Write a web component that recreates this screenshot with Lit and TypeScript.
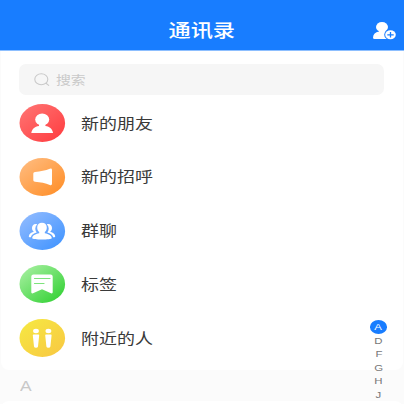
import { LitElement, html, css, svg } from "lit";
import { customElement } from "lit/decorators.js";

const grad = (id: string, a: string, b: string) => svg`
  <defs><linearGradient id=${id} x1="0.1" y1="0.1" x2="0.85" y2="0.9">
    <stop offset="0" stop-color=${a}></stop><stop offset="1" stop-color=${b}></stop>
  </linearGradient></defs>
  <ellipse cx="23.300" cy="19" rx="22.800" ry="18.900" fill="url(#${id})"></ellipse>`;

const entries = [
  {
    label: "新的朋友",
    icon: svg`${grad("red", "#ff706f", "#ff4245")}
      <ellipse cx="23.200" cy="15.500" rx="7" ry="6" fill="#fff"></ellipse>
      <path fill="#fff" d="M20 18h6.400v4c4.400.7 7.200 3.300 7.700 7H12.300c.5-3.700 3.300-6.300 7.700-7z"></path>`,
  },
  {
    label: "新的招呼",
    icon: svg`${grad("orange", "#ffb97a", "#ff922f")}
      <path fill="#fff" d="M16 14c5.500-.3 10.500-1.600 14.800-3.200q2.200-.7 2.200 1.200v13.800q0 1.900-2.200 1.200c-4.300-1.600-9.300-2.900-14.800-3.200q-1.700-.1-1.700-1.500v-6.800q0-1.400 1.700-1.500z"></path>`,
  },
  {
    label: "群聊",
    icon: svg`${grad("blue", "#8db9ff", "#4797ff")}
      <g fill="#fff">
        <path d="M18.200 12.200c-3-1-5.200.8-5.200 3.900 0 1.800.8 2.900 1.800 3.700-3 .7-4.800 2.200-5 4.800q0 .7.800.7h1.200c.8-2.500 2.700-3.900 5.900-4.800-2-2.500-2-5.800.5-8.300z"></path>
        <path d="M27.800 12.200c3-1 5.200.8 5.200 3.900 0 1.800-.8 2.900-1.800 3.700 3 .7 4.800 2.200 5 4.800q0 .7-.8.7h-1.200c-.8-2.500-2.700-3.900-5.900-4.800 2-2.500 2-5.800-.5-8.300z"></path>
        <path d="M23 10.800c3 0 4.800 2 4.800 4.700 0 2-.8 3.500-2 4.500v1.300c4 .8 6.700 2.100 7 4.700 0 1.200-4.800 1.500-9.800 1.500s-9.800-.3-9.800-1.500c.3-2.600 3-3.900 7-4.700V20c-1.200-1-2-2.500-2-4.500 0-2.700 1.800-4.700 4.800-4.700z"></path>
      </g>`,
  },
  {
    label: "标签",
    icon: svg`${grad("green", "#a1ee9b", "#3ad33b")}
      <path fill="#fff" d="M14.500 9.500h17q2.200 0 2.200 2v15.800q0 1.600-1.700 1L23 24.300l-9 4q-1.700.6-1.700-1V11.500q0-2 2.200-2z"></path>
      <path stroke="#7de37b" stroke-width="1.200" stroke-linecap="round" d="M15.500 13.500h15.500M15.500 18.500h9.500"></path>`,
  },
  {
    label: "附近的人",
    icon: svg`${grad("yellow", "#f6e642", "#f8cb42")}
      <g fill="#fff">
        <ellipse cx="17" cy="12" rx="2.900" ry="2.200"></ellipse>
        <ellipse cx="29.400" cy="12" rx="2.900" ry="2.200"></ellipse>
        <path d="M14.500 15.500h5q.7 0 .7.700L19 27.500q-.2 1.300-2 1.300t-2-1.300l-1.200-11.300q0-.7.700-.7zM26.900 15.500h5q.7 0 .7.700l-1.200 11.300q-.2 1.300-2 1.300t-2-1.300l-1.200-11.300q0-.7.700-.7z"></path>
      </g>`,
  },
];

@customElement("app-root")
export class AppRoot extends LitElement {
  static styles = css`
    :host {
      display: flex;
      flex-direction: column;
      position: relative;
      width: 404px;
      height: 404px;
      overflow: hidden;
      background: #fbfbfb;
      color: #3a3a3a;
      font-family: "Noto Sans CJK SC", sans-serif;
    }
    svg { display: block; flex: none; }
    .header {
      display: grid;
      grid-template-columns: 1fr auto 1fr;
      align-items: center;
      flex: none;
      box-sizing: border-box;
      height: 51px;
      padding: 10px 7px 0;
      border-bottom: 1px solid #8dbfff;
      background: #187dff;
      color: #fff;
    }
    .title {
      grid-column: 2;
      font-size: 18.5px;
      line-height: 28px;
      font-weight: 500;
      margin: 0 1px 2px 0;
      transform: scaleX(1.2);
    }
    .add { justify-self: end; }
    .card {
      flex: none;
      box-sizing: border-box;
      height: 319px;
      margin: 0 1px;
      padding: 13px 18.400px 0;
      background: #fff;
      border-radius: 0 0 8px 8px;
    }
    .search {
      display: flex;
      align-items: center;
      gap: 6px;
      box-sizing: border-box;
      width: 365px;
      height: 31px;
      padding-left: 14.600px;
      border-radius: 7px;
      background: #f6f6f6;
      color: #c9c9c9;
      font-size: 12.400px;
      line-height: 18px;
    }
    .glass { margin-top: 1px; }
    .stretch { transform: scaleX(1.2); transform-origin: left; }
    .list { display: flex; flex-direction: column; gap: 15.800px; padding-top: 9px; }
    .row { display: flex; align-items: center; gap: 15px; height: 38px; }
    .label { font-size: 15px; line-height: 22px; margin-bottom: 1px; }
    .section {
      flex: none;
      height: 31px;
      padding: 0 19.500px;
      font: 15px/31px "Liberation Sans", sans-serif;
      color: #c8c8c8;
    }
    .letter { display: inline-block; transform: scaleX(1.16); transform-origin: left; }
    .next { flex: none; height: 12px; margin: 0 1px; border-radius: 8px 8px 0 0; background: #fff; }
    .index {
      position: absolute;
      right: 17px;
      top: 320px;
      display: flex;
      flex-direction: column;
      align-items: center;
      font: 9.500px/13.600px "Liberation Sans", sans-serif;
      color: #777;
    }
    .key {
      width: 17px;
      height: 13.600px;
      text-align: center;
    }
    .key span { display: inline-block; transform: scaleX(1.2); }
    .active { background: #187dff; border-radius: 50%; color: #fff; }
  `;

  render() {
    return html`
      <header class="header">
        <h1 class="title">通讯录</h1>
        <svg class="add" width="26" height="20" viewBox="0 0 26 20">
          <ellipse cx="11" cy="7" rx="6" ry="5.100" fill="#fff"></ellipse>
          <path fill="#fff" d="M8 10h6.500v2l3 1.500v5.500H3.500q-1.500 0-1.500-1.500c.2-3.300 2.200-5.400 6-6z"></path>
          <ellipse cx="19.500" cy="14.800" rx="6.300" ry="5.400" fill="#187dff"></ellipse>
          <ellipse cx="19.500" cy="14.800" rx="5.300" ry="4.500" fill="#fff"></ellipse>
          <path stroke="#187dff" stroke-width="1.300" d="M16.300 14.800h6.400M19.500 12v5.600"></path>
        </svg>
      </header>
      <main class="card">
        <div class="search">
          <svg class="glass" width="16" height="14" viewBox="0 0 16 14" fill="none" stroke="#c9c9c9" stroke-width="1.100" stroke-linecap="round">
            <ellipse cx="7.300" cy="6.300" rx="6.500" ry="5.500"></ellipse>
            <path d="M12 10.300l2.700 2.100"></path>
          </svg>
          <span class="stretch">搜索</span>
        </div>
        <div class="list">
          ${entries.map(
            (e) => html`<div class="row">
              <svg width="46.500" height="38" viewBox="0 0 46.500 38">${e.icon}</svg>
              <span class="label stretch">${e.label}</span>
            </div>`
          )}
        </div>
      </main>
      <div class="section"><span class="letter">A</span></div>
      <div class="next"></div>
      <nav class="index">
        ${["A", "D", "F", "G", "H", "J"].map(
          (k, i) => html`<div class="key ${i === 0 ? "active" : ""}"><span>${k}</span></div>`
        )}
      </nav>
    `;
  }
}
